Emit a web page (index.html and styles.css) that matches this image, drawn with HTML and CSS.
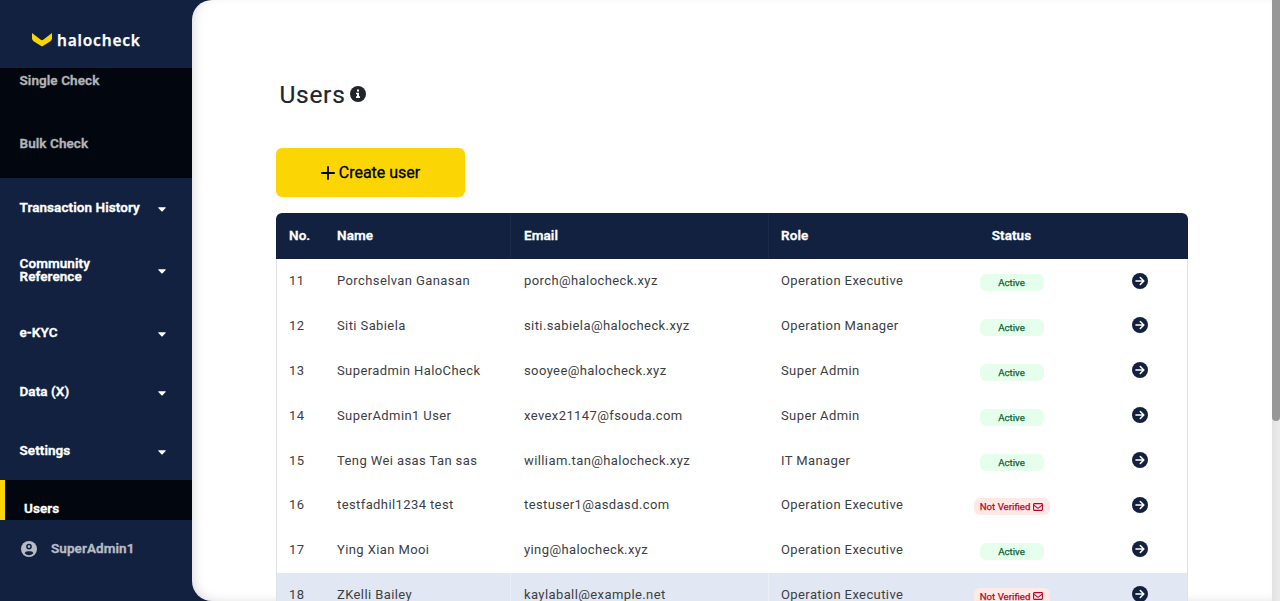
FILE: index.html
```html
<!DOCTYPE html>
<html lang="en">
<head>
<meta charset="utf-8">
<title>Users</title>
<link rel="stylesheet" href="styles.css">
</head>
<body>
<svg width="0" height="0" class="defs" aria-hidden="true">
  <symbol id="go" viewBox="0 0 16 16"><circle cx="8" cy="8" r="8" fill="#12213f"/><path d="M4 8h7.6M8.3 4.5 11.8 8l-3.5 3.5" fill="none" stroke="#fff" stroke-width="1.6" stroke-linecap="round" stroke-linejoin="round"/></symbol>
  <symbol id="mail" viewBox="0 0 10 8"><rect x=".6" y=".6" width="8.8" height="6.8" rx=".6" fill="none" stroke="#b5062c" stroke-width="1.1"/><path d="M.8 2.1 4.3 4.9q.7.5 1.4 0L9.2 2.1" fill="none" stroke="#b5062c" stroke-width="1.1"/></symbol>
  <symbol id="caret" viewBox="0 0 8 5"><path d="M.7.2h6.6q.8.3.3.9L4.6 4.3q-.6.6-1.2 0L.4 1.1Q-.1.5.7.2z" fill="#fff"/></symbol>
</svg>
<div class="app">
  <aside class="sidebar">
    <div class="brand">
      <svg class="brand-mark" viewBox="0 0 20 14"><path d="M0 0 8.800 6.800Q10 7.600 11.200 6.800L20 0V5.400Q19.800 7.200 18.400 8.200L10 13.600 1.600 8.200Q.2 7.200 0 5.400z" fill="#fbd504"/></svg>
      <span class="brand-name">halocheck</span>
    </div>
    <nav class="menu">
      <div class="submenu">
        <a class="sub-item">Single Check</a>
        <a class="sub-item">Bulk Check</a>
      </div>
      <a class="item"><span>Transaction History</span><svg class="caret"><use href="#caret"/></svg></a>
      <a class="item item-tall"><span>Community<br>Reference</span><svg class="caret"><use href="#caret"/></svg></a>
      <a class="item"><span>e-KYC</span><svg class="caret"><use href="#caret"/></svg></a>
      <a class="item"><span>Data (X)</span><svg class="caret"><use href="#caret"/></svg></a>
      <a class="item"><span>Settings</span><svg class="caret"><use href="#caret"/></svg></a>
      <a class="current">Users</a>
    </nav>
    <div class="account">
      <svg class="avatar" viewBox="0 0 16 16"><circle cx="8" cy="8" r="8" fill="#b8bcc5"/><circle cx="8" cy="5.600" r="2.100" fill="#b8bcc5" stroke="#12213f" stroke-width="1.500"/><path d="M3.600 12.200q.6-2 3-2h2.800q2.400 0 3 2-1.900 2-4.400 2t-4.400-2z" fill="#12213f"/></svg>
      <span class="account-name">SuperAdmin1</span>
    </div>
  </aside>
  <main class="panel">
    <h1 class="title">Users <svg class="info" viewBox="0 0 16 16"><circle cx="8" cy="8" r="8" fill="#212529"/><path d="M7 3.500h2v2H7zM6 6.700h3v3.600h1V12H6v-1.700h1V8.300H6z" fill="#fff"/></svg></h1>
    <button class="create"><svg class="plus" viewBox="0 0 14 14"><path d="M7 .9v12.200M.9 7h12.200" stroke="#000" stroke-width="1.800" stroke-linecap="round"/></svg><span>Create user</span></button>
    <table class="users">
      <colgroup><col class="c-no"><col class="c-name"><col class="c-email"><col class="c-role"><col class="c-status"><col class="c-go"></colgroup>
      <thead><tr><th>No.</th><th>Name</th><th>Email</th><th>Role</th><th class="mid">Status</th><th></th></tr></thead>
      <tbody>
        <tr><td>11</td><td>Porchselvan Ganasan</td><td>porch@halocheck.xyz</td><td>Operation Executive</td><td class="mid"><span class="badge ok">Active</span></td><td class="mid"><svg class="go"><use href="#go"/></svg></td></tr>
        <tr><td>12</td><td>Siti Sabiela</td><td>siti.sabiela@halocheck.xyz</td><td>Operation Manager</td><td class="mid"><span class="badge ok">Active</span></td><td class="mid"><svg class="go"><use href="#go"/></svg></td></tr>
        <tr><td>13</td><td>Superadmin HaloCheck</td><td>sooyee@halocheck.xyz</td><td>Super Admin</td><td class="mid"><span class="badge ok">Active</span></td><td class="mid"><svg class="go"><use href="#go"/></svg></td></tr>
        <tr><td>14</td><td>SuperAdmin1 User</td><td>xevex21147@fsouda.com</td><td>Super Admin</td><td class="mid"><span class="badge ok">Active</span></td><td class="mid"><svg class="go"><use href="#go"/></svg></td></tr>
        <tr><td>15</td><td>Teng Wei asas Tan sas</td><td>william.tan@halocheck.xyz</td><td>IT Manager</td><td class="mid"><span class="badge ok">Active</span></td><td class="mid"><svg class="go"><use href="#go"/></svg></td></tr>
        <tr><td>16</td><td>testfadhil1234 test</td><td>testuser1@asdasd.com</td><td>Operation Executive</td><td class="mid"><span class="badge bad">Not Verified <svg class="mail"><use href="#mail"/></svg></span></td><td class="mid"><svg class="go"><use href="#go"/></svg></td></tr>
        <tr><td>17</td><td>Ying Xian Mooi</td><td>ying@halocheck.xyz</td><td>Operation Executive</td><td class="mid"><span class="badge ok">Active</span></td><td class="mid"><svg class="go"><use href="#go"/></svg></td></tr>
        <tr class="hover"><td>18</td><td>ZKelli Bailey</td><td>kaylaball@example.net</td><td>Operation Executive</td><td class="mid"><span class="badge bad">Not Verified <svg class="mail"><use href="#mail"/></svg></span></td><td class="mid"><svg class="go"><use href="#go"/></svg></td></tr>
      </tbody>
    </table>
  </main>
  <div class="scroll"><div class="thumb"></div></div>
</div>
</body>
</html>
```
FILE: styles.css
```css
* { box-sizing: border-box; }
body { margin: 0; background: #12213f; font-family: Roboto, sans-serif; color: #212529; overflow: hidden; }
.defs { position: absolute; }
.app { display: flex; height: 601px; overflow: hidden; }

.sidebar { width: 192px; flex: none; display: flex; flex-direction: column; color: #fff; font-size: 13.5px; font-weight: 600; letter-spacing: .08px; line-height: 13px; -webkit-text-stroke: .35px currentColor; }
.brand { height: 68px; flex: none; display: flex; align-items: center; gap: 5px; padding: 12px 0 0 32px; -webkit-text-stroke: .25px currentColor; }
.brand-mark { width: 20px; height: 14px; }
.brand-name { font-family: "Noto Sans", sans-serif; font-size: 15.5px; font-weight: 600; letter-spacing: .8px; line-height: 20px; margin-top: -1px; }
.menu { height: 452px; flex: none; overflow: hidden; }
.submenu { height: 110px; background: #01060f; color: #b2b4b7; padding: 6px 20px 6px 19.5px; }
.sub-item { display: block; height: 63px; }
.item { height: 59px; display: flex; align-items: center; justify-content: space-between; padding: 0 26px 1px 19.5px; }
.item-tall { height: 66px; }
.caret { width: 8px; height: 5px; margin-top: 4px; }
.current { display: block; height: 60px; background: #01060f; border-left: 5px solid #fbd504; padding: 22px 0 0 19px; }
.account { display: flex; align-items: center; gap: 14px; height: 58px; padding-left: 21px; color: #b8bcc5; }
.account-name { margin-top: -2px; }
.avatar { width: 16px; height: 16px; }

.panel { width: 1080px; flex: none; background: #fff; border-radius: 20px 0 0 20px; box-shadow: inset 5px -2px 12px -4px rgba(0, 0, 0, .16); padding: 79px 84px 0; overflow: hidden; }
.title { margin: 0 0 0 3.5px; height: 69px; display: flex; gap: 4.5px; align-items: flex-start; font-size: 24.500px; line-height: 31px; font-weight: 400; letter-spacing: .7px; -webkit-text-stroke: .2px currentColor; }
.info { width: 16px; height: 16px; margin-top: 7px; }
.create { width: 189px; height: 49px; margin: 0 0 16px; border: 0; border-radius: 6px; background: #fbd504; display: flex; align-items: center; justify-content: center; gap: 4px; font: 400 16px/24px Roboto, sans-serif; color: #000; -webkit-text-stroke: .3px #000; }
.plus { width: 14px; height: 14px; }

.users { width: 912px; table-layout: fixed; border-collapse: separate; border-spacing: 0; font-size: 13px; letter-spacing: .4px; }
.c-no { width: 48px; }
.c-name { width: 186px; }
.c-email { width: 258px; }
.c-role { width: 163px; }
.c-status { width: 161px; }
.c-go { width: 96px; }
.users th { height: 46px; padding: 0 13px 2px; background: #12213f; color: #fff; text-align: left; font-size: 13.5px; font-weight: 600; letter-spacing: .08px; -webkit-text-stroke: .3px #fff; }
.users th:first-child { border-radius: 6px 0 0; }
.users th:last-child { border-radius: 0 6px 0 0; }
.users th:nth-child(3), .users th:nth-child(4) { border-left: 1px solid #1b2a47; }
.users td { height: 44.8px; padding: 0 13px 1px; color: #3c4044; }
.users td:first-child { border-left: 1px solid #dee2e6; padding-left: 12px; }
.users td:last-child { border-right: 1px solid #dee2e6; padding-bottom: 2px; }
.users td:nth-child(3), .users td:nth-child(4) { border-left: 1px solid transparent; }
.users th:nth-child(4), .users td:nth-child(4) { padding-left: 12px; }
.users .mid { text-align: center; }
.hover td { background: #e1e7f3; }
.users .hover td:nth-child(3), .users .hover td:nth-child(4) { border-left-color: #ebeff7; }
.badge { display: inline-flex; align-items: center; justify-content: center; gap: 3px; height: 17px; border-radius: 6px; font-size: 9.7px; font-weight: 400; letter-spacing: 0; vertical-align: middle; margin-top: 4px; -webkit-text-stroke: .25px currentColor; }
.ok { width: 64px; background: #e6ffec; color: #11622f; }
.bad { width: 76px; background: #ffe9e6; color: #b5062c; }
.mail { width: 10px; height: 8px; }
.go { width: 16px; height: 16px; vertical-align: middle; }

.scroll { width: 8px; flex: none; background: linear-gradient(90deg, #e2e2e2, #ebebeb); }
.thumb { height: 421px; background: #979797; border-radius: 0 0 4px 4px; }
```
